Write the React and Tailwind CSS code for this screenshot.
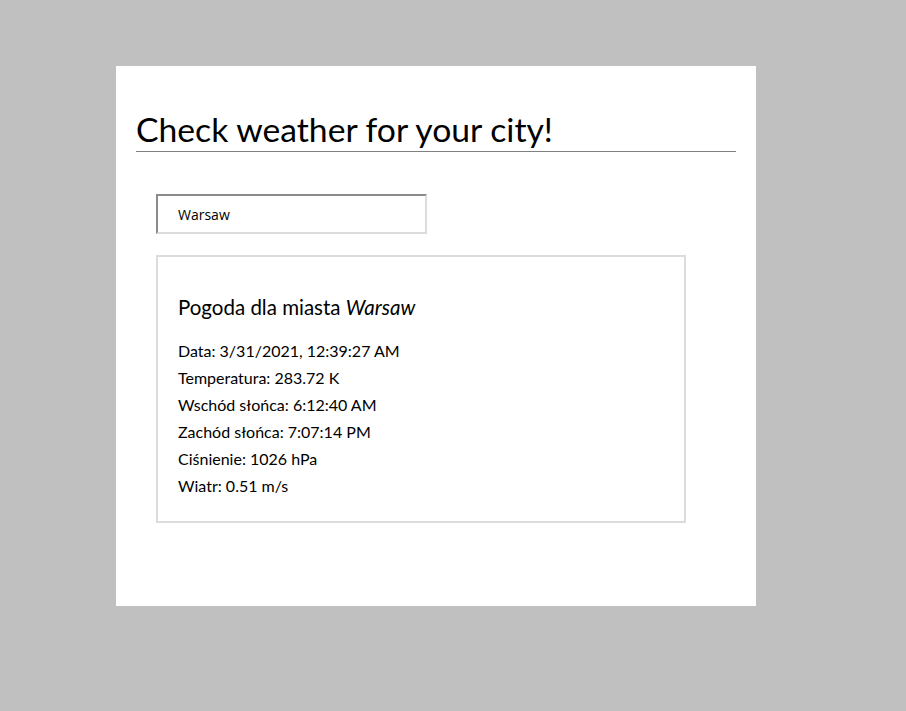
import React from 'react'

const rows = [
  'Data: 3/31/2021, 12:39:27 AM',
  'Temperatura: 283.72 K',
  'Wschód słońca: 6:12:40 AM',
  'Zachód słońca: 7:07:14 PM',
  'Ciśnienie: 1026 hPa',
  'Wiatr: 0.51 m/s'
]

const App = () => {
  return (
    <div className="min-h-screen bg-[#c0c0c0] pt-[66px] pl-[116px] font-['Lato',sans-serif] text-black">
      <div className="w-[640px] h-[540px] bg-white px-5 pt-[44px]">
        <h1 className="text-[33.7px] leading-[38px] pb-[3px] font-normal border-b border-[#808080]">
          Check weather for your city!
        </h1>

        <input
          type="text"
          defaultValue="Warsaw"
          className="block mt-[42px] ml-5 w-[271px] h-[40px] px-5 text-[14px] font-['Open_Sans',sans-serif] border-2 border-t-[#8a8a8a] border-l-[#8a8a8a] border-r-[#dcdcdc] border-b-[#dcdcdc] outline-none"
        />

        {/* Weather result */}
        <div className="mt-[21px] ml-5 w-[530px] h-[268px] border-2 border-[#dcdcdc] px-5 pt-[37px]">
          <h3 className="text-[20.5px] leading-[27px] font-normal">
            Pogoda dla miasta <em>Warsaw</em>
          </h3>
          <div className="mt-[16px]">
            {rows.map((row, i) => (
              <p key={i} className="text-[16px] leading-[27px]">{row}</p>
            ))}
          </div>
        </div>
      </div>
    </div>
  )
}

export default App
